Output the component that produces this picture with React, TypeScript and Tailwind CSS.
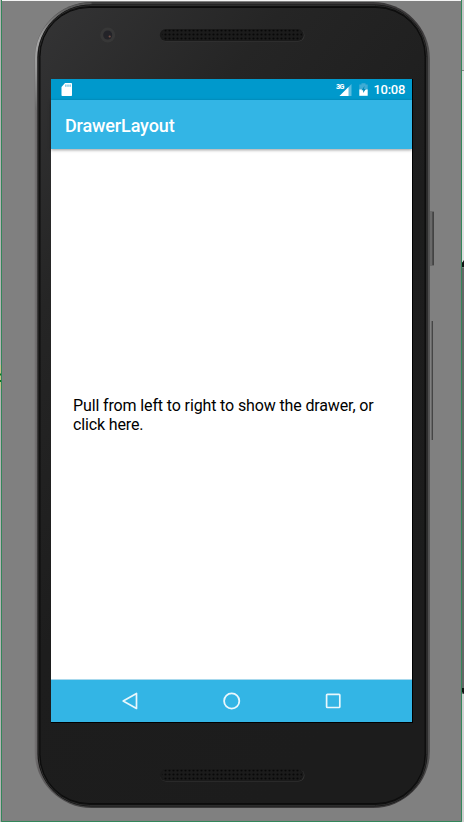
import React from "react";

const font = "font-['Roboto',sans-serif]";

function Grille({ id }: { id: string }) {
  return (
    <svg width="146" height="14" viewBox="0 0 146 14" className="block">
      <defs>
        <pattern id={id} width="4" height="4" patternUnits="userSpaceOnUse">
          <rect width="4" height="4" fill="#1b1b1b" />
          <circle cx="2.5" cy="2.5" r="1.1" fill="#080808" />
        </pattern>
      </defs>
      <rect x="1" y="1.5" width="144.500" height="12" rx="6" fill="#363636" />
      <rect x="0.800" y="1" width="144" height="12" rx="6" fill="#191919" />
      <rect x="3" y="1.5" width="140" height="11" rx="5" fill={`url(#${id})`} />
    </svg>
  );
}

function StatusBar() {
  return (
    <div className="flex h-[21px] shrink-0 items-center bg-[#0099cc] pl-[10px] pr-[7px]">
      <svg width="12" height="13" viewBox="0 0 12 13">
        <path d="M4 0h6.2q.8 0 .8.8v11.4q0 .8-.8.8H1.300q-.8 0-.8-.8V4z" fill="#fff" />
        <path d="M4.900 1.500v2.300M7 1.500v2.300M9.100 1.500v2.300" stroke="#42afd6" strokeWidth="1" />
      </svg>
      <svg width="16" height="14" viewBox="0 0 16 14" className="ml-auto overflow-visible">
        <path d="M15.500 1v12H3.500z" fill="#5bbcde" />
        <path d="M12.500 4v9H3.500z" fill="#fff" />
        <text x="0" y="6" fontFamily="Roboto, sans-serif" fontSize="7.200" fontWeight="900" fill="#fff" textLength="8.500">3G</text>
      </svg>
      <svg width="9" height="13" viewBox="0 0 9 13" className="ml-[7px]">
        <path d="M.3 1.500h2.200V.2h4v1.300h2.200V7H.3z" fill="#40acd4" />
        <path d="M.3 6.500h8.400v6.300H.3z" fill="#fff" />
        <path d="M5.500 3 2.500 7.300h1.700v2.700l2.600-3.900H5z" fill="#0088b8" />
      </svg>
      <span className={`${font} ml-[5.500px] text-[13px] font-medium leading-[21px] tracking-[-0.3px] text-white`}>10:08</span>
    </div>
  );
}

function NavBar() {
  return (
    <div className="flex h-[43px] shrink-0 items-center justify-center gap-[81px] border-t border-[#a8d9ed] bg-[#33b5e5] pb-[1px]">
      <svg width="20" height="20" viewBox="0 0 20 20" fill="none" stroke="#e9f7fc" strokeWidth="1.700">
        <path d="M15.500 2.500v15L2.200 10z" strokeLinejoin="round" />
      </svg>
      <svg width="20" height="20" viewBox="0 0 20 20" fill="none" stroke="#e9f7fc" strokeWidth="1.800">
        <circle cx="9.700" cy="10" r="7.600" />
      </svg>
      <svg width="20" height="20" viewBox="0 0 20 20" fill="none" stroke="#e9f7fc" strokeWidth="1.700">
        <rect x="3.600" y="3.300" width="13.200" height="13.200" rx="0.800" />
      </svg>
    </div>
  );
}

export default function App() {
  return (
    <div className="relative h-[822px] w-[464px] overflow-hidden bg-[#808080]">
      <svg className="absolute inset-0" width="464" height="822" viewBox="0 0 464 822">
        <defs>
          <linearGradient id="glass" x1="0" y1="0" x2="0.600" y2="1">
            <stop offset="0" stopColor="#343435" />
            <stop offset="0.280" stopColor="#252525" />
            <stop offset="0.600" stopColor="#1d1d1d" />
            <stop offset="1" stopColor="#1c1c1c" />
          </linearGradient>
          <linearGradient id="rim" x1="0" x2="1">
            <stop offset="0" stopColor="#777576" />
            <stop offset="0.010" stopColor="#605e5f" />
            <stop offset="0.150" stopColor="#3b3b3b" />
            <stop offset="0.980" stopColor="#3b393a" />
            <stop offset="1" stopColor="#555" />
          </linearGradient>
          <linearGradient id="shine" x1="0" y1="0" x2="0" y2="1">
            <stop offset="0" stopColor="#555" />
            <stop offset="0.350" stopColor="#a6a6a6" />
            <stop offset="0.600" stopColor="#999" />
            <stop offset="1" stopColor="#6c6c6c" />
          </linearGradient>
        </defs>
        <rect width="464" height="1" fill="#f4f4f4" />
        <rect width="1" height="822" fill="#b5b5b5" />
        <rect y="365" width="1" height="24" fill="#c5c08a" />
        <path d="M0 374.500h2M0 381h2" stroke="#087a20" strokeWidth="2" />
        <rect x="462" y="0" width="2" height="70" fill="#c8c8c8" />
        <rect x="462" y="70" width="2" height="1" fill="#888" />
        <rect x="462" y="71" width="2" height="191" fill="#e0e0e0" />
        <rect x="462" y="268" width="2" height="420" fill="#666" />
        <rect x="462" y="694" width="2" height="128" fill="#d0d0d0" />
        <path d="M464 260l-2 3v4h2zM462 688h2v6l-2-2z" fill="#111" />
        <path d="M1.500 0v821.500h460V0" fill="none" stroke="#33865a" />
        <rect x="430" y="211" width="4" height="55" fill="#696969" />
        <rect x="432.500" y="212" width="1.200" height="53" fill="#343434" />
        <rect x="431" y="321" width="2" height="119" fill="#686868" />
        <rect x="432" y="321" width="1" height="119" fill="#454545" />
        <rect x="34.500" y="2" width="395.500" height="806" rx="57" fill="url(#rim)" />
        <path d="M36 110V59A55.500 55.500 0 0 1 91.500 3.500" fill="none" stroke="url(#shine)" strokeWidth="2" />
        <rect x="37.500" y="4.500" width="390" height="802" rx="53" fill="#101010" />
        <rect x="38.800" y="5.500" width="387.700" height="800" rx="51" fill="none" stroke="#2c2c2c" />
        <rect x="40" y="7.500" width="385" height="796" rx="49" fill="url(#glass)" stroke="#0c0c0c" />
        <circle cx="107.700" cy="35" r="7.500" fill="#373737" />
        <circle cx="107.700" cy="35" r="4.500" fill="#232328" />
        <circle cx="109.700" cy="36.500" r="1.100" fill="#714e45" />
      </svg>
      <div className="relative flex h-full flex-col pl-[51px] pt-[28px]">
        <div className="ml-[108px]"><Grille id="top-holes" /></div>
        <main className="mt-[37px] flex h-[644px] w-[362px] shrink-0 flex-col border-b border-r border-black bg-white">
          <StatusBar />
          <header className="z-10 flex h-[49px] shrink-0 items-center bg-[#33b5e5] px-[14px] pt-[2px] shadow-[0_1px_3px_rgba(0,0,0,0.4)]">
            <h1 className={`${font} text-[18px] font-medium leading-6 tracking-[-0.13px] text-white`}>DrawerLayout</h1>
          </header>
          <section className="flex grow items-center px-[22px] pt-[2px]">
            <p className={`${font} text-[16px] leading-[19px] tracking-[-0.13px] text-black`}>Pull from left to right to show the drawer, or<br />click here.</p>
          </section>
          <NavBar />
        </main>
        <div className="ml-[108px] mt-[45px]"><Grille id="bottom-holes" /></div>
      </div>
    </div>
  );
}
